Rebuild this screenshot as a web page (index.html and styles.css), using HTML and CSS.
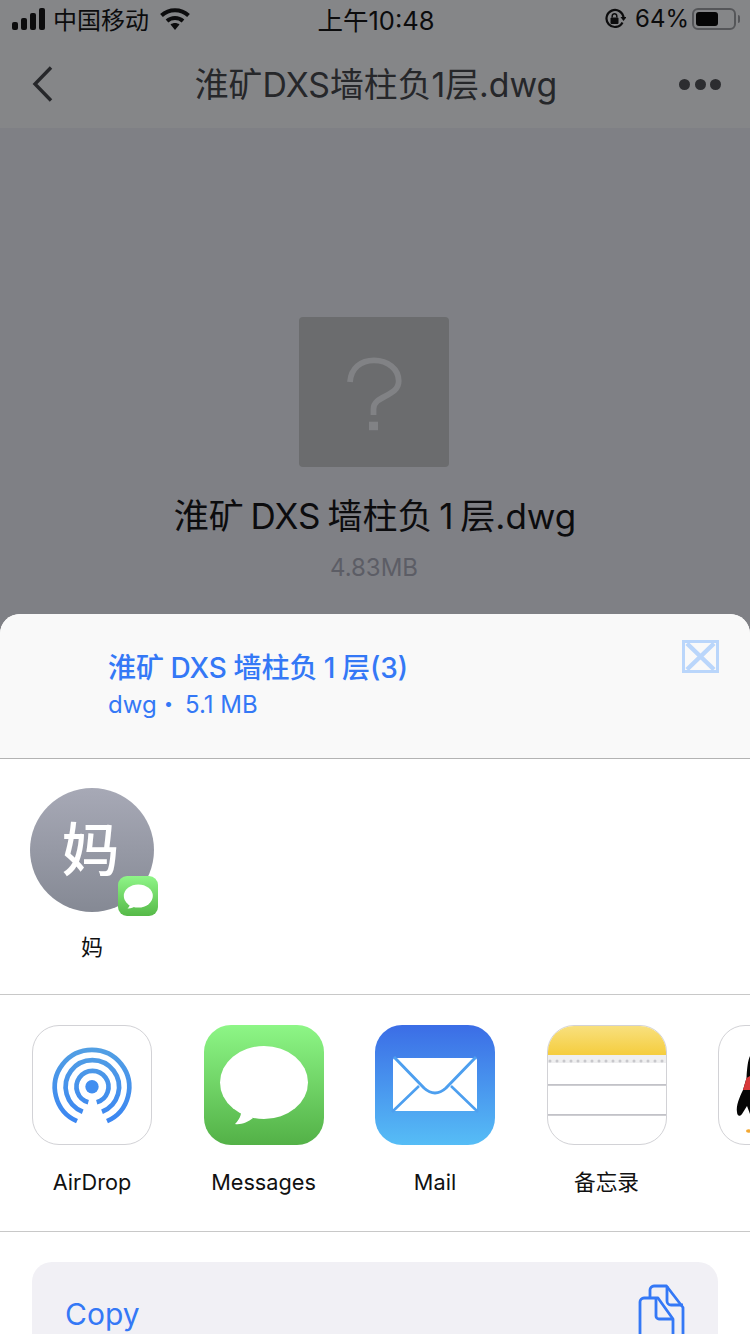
FILE: index.html
```html
<!DOCTYPE html>
<html lang="zh-CN">
<head>
<meta charset="utf-8">
<title>淮矿DXS墙柱负1层.dwg</title>
<link rel="stylesheet" href="styles.css">
</head>
<body>
<div class="page">
  <header class="top">
    <div class="status">
      <div class="status-left">
        <svg class="signal" width="33" height="22" viewBox="0 0 33 22"><rect x="0" y="14" width="6" height="8" rx="2"/><rect x="9" y="10" width="6" height="12" rx="2"/><rect x="18" y="5" width="6" height="17" rx="2"/><rect x="27" y="0" width="6" height="22" rx="2"/></svg>
        <span class="carrier">中国移动</span>
        <svg class="wifi" width="30" height="22" viewBox="0 0 30 22"><path d="M1.500 7.500C9 .5 21 .5 28.500 7.500" fill="none" stroke="#0c0c0d" stroke-width="4"/><path d="M7 13c4.500-4 11.500-4 16 0" fill="none" stroke="#0c0c0d" stroke-width="4"/><path d="M10.500 16.500c2.500-2 6.500-2 9 0L15 22z" fill="#0c0c0d"/></svg>
      </div>
      <div class="clock">上午10:48</div>
      <div class="status-right">
        <svg class="lock" width="22" height="22" viewBox="0 0 22 22"><path d="M18.500 14.500A8.500 8.500 0 1 1 19.500 10" fill="none" stroke="#0c0c0d" stroke-width="2.200"/><path d="M16.500 9h6l-3 4z" fill="#0c0c0d"/><rect x="6.500" y="9.500" width="8" height="6.500" rx="1" fill="#0c0c0d"/><path d="M8.200 9.500V8a2.300 2.300 0 0 1 4.600 0v1.500" fill="none" stroke="#0c0c0d" stroke-width="1.500"/></svg>
        <span class="battery-text">64%</span>
        <div class="battery"><div class="battery-fill"></div></div>
        <div class="battery-cap"></div>
      </div>
    </div>
    <nav class="nav">
      <svg class="back" width="24" height="38" viewBox="0 0 24 38"><path d="M20 2.500 4 19l16 16.500" fill="none" stroke="#26272a" stroke-width="3.400"/></svg>
      <div class="nav-title">淮矿DXS墙柱负1层.dwg</div>
      <div class="dots"><span class="dot"></span><span class="dot"></span><span class="dot"></span></div>
    </nav>
  </header>

  <main class="preview">
    <div class="file-icon">
      <svg width="150" height="150" viewBox="0 0 150 150"><path d="M74.500 98V92C74.500 78 99.700 80 99.700 64 99.700 52 89 43.300 75 43.300 62 43.300 52 51 51 65" fill="none" stroke="#818285" stroke-width="5.800"/><rect x="70" y="104.700" width="9" height="8.500" fill="#818285"/></svg>
    </div>
    <div class="file-name">淮矿 DXS 墙柱负 1 层.dwg</div>
    <div class="file-size">4.83MB</div>
  </main>

  <section class="sheet">
    <div class="sheet-head">
      <div class="sheet-info">
        <div class="sheet-title">淮矿 DXS 墙柱负 1 层(3)</div>
        <div class="sheet-meta">dwg・&#8201;5.1 MB</div>
      </div>
      <svg class="close" width="37" height="33" viewBox="0 0 37 33"><rect x="1.500" y="1.500" width="34" height="30" fill="none" stroke="#bad6fb" stroke-width="3"/><path d="M5 3.500 32 29.500M32 3.500 5 29.500" stroke="#bad6fb" stroke-width="4.500"/></svg>
    </div>

    <div class="people">
      <div class="person">
        <div class="avatar">妈
          <svg class="avatar-badge" width="40" height="40" viewBox="0 0 40 40">
            <defs><linearGradient id="bg1" x1="0" y1="0" x2="0" y2="1"><stop offset="0" stop-color="#8ff588"/><stop offset="1" stop-color="#56b948"/></linearGradient></defs>
            <rect width="40" height="40" rx="9" fill="url(#bg1)"/>
            <ellipse cx="20.300" cy="20" rx="14.500" ry="11.500" fill="#fff"/>
            <path d="M12 27c0 2-1 4.500-2.500 5.500 3 .3 6-1 8-2.500z" fill="#fff"/>
          </svg>
        </div>
        <div class="person-name">妈</div>
      </div>
    </div>

    <div class="apps">
      <div class="app">
        <div class="app-icon app-icon-line">
          <svg width="118" height="118" viewBox="0 0 118 118">
            <defs><linearGradient id="air" gradientUnits="userSpaceOnUse" x1="0" y1="20" x2="0" y2="96"><stop offset="0" stop-color="#53a0e3"/><stop offset="1" stop-color="#3b86f2"/></linearGradient></defs>
            <g fill="none" stroke="url(#air)" stroke-width="4.700">
              <path d="M44 95.200A37.200 37.200 0 1 1 74 95.200"/>
              <path d="M49.700 85.700A26.700 26.700 0 1 1 69 85.700"/>
              <path d="M55.300 76.300A16 16 0 1 1 63.700 76.300"/>
            </g>
            <circle cx="59" cy="60.700" r="6.700" fill="#418ef0"/>
          </svg>
        </div>
        <div class="app-name">AirDrop</div>
      </div>
      <div class="app">
        <div class="app-icon">
          <svg width="120" height="120" viewBox="0 0 120 120">
            <defs><linearGradient id="msg" x1="0" y1="0" x2="0" y2="1"><stop offset="0" stop-color="#8df686"/><stop offset="1" stop-color="#53b147"/></linearGradient></defs>
            <rect width="120" height="120" fill="url(#msg)"/>
            <ellipse cx="60" cy="57.500" rx="44" ry="36.500" fill="#fff"/>
            <path d="M37 84c1 6-2 11-6 15 6 1 13-2 18-6z" fill="#fff"/>
          </svg>
        </div>
        <div class="app-name">Messages</div>
      </div>
      <div class="app">
        <div class="app-icon">
          <svg width="120" height="120" viewBox="0 0 120 120">
            <defs><linearGradient id="mail" x1="0" y1="0" x2="0" y2="1"><stop offset="0" stop-color="#3b6de6"/><stop offset="1" stop-color="#56bdf6"/></linearGradient></defs>
            <rect width="120" height="120" fill="url(#mail)"/>
            <path d="M20 33h80a2 2 0 0 1 2 2v49a2 2 0 0 1-2 2H20a2 2 0 0 1-2-2V35a2 2 0 0 1 2-2z" fill="#fff"/>
            <path d="M17 87 44 61M103 87 76 61" stroke="#4d9fef" stroke-width="2.600" fill="none"/>
            <path d="M19 32 49 63Q60 73 71 63L101 32" stroke="#4d9fef" stroke-width="3" fill="none"/>
          </svg>
        </div>
        <div class="app-name">Mail</div>
      </div>
      <div class="app">
        <div class="app-icon app-icon-line">
          <svg width="118" height="118" viewBox="0 0 118 118">
            <defs><linearGradient id="note" x1="0" y1="0" x2="0" y2="1"><stop offset="0" stop-color="#f8e07e"/><stop offset="1" stop-color="#f5cd3e"/></linearGradient></defs>
            <rect width="118" height="29" fill="url(#note)"/>
            <rect y="29" width="118" height="8" fill="#efeff0"/>
            <line x1="2" y1="35" x2="118" y2="35" stroke="#c8c8cc" stroke-width="3" stroke-linecap="round" stroke-dasharray="0 7"/>
            <rect y="58" width="118" height="1.800" fill="#c2c2c8"/>
            <rect y="88" width="118" height="1.800" fill="#c2c2c8"/>
          </svg>
        </div>
        <div class="app-name">备忘录</div>
      </div>
      <div class="app">
        <div class="app-icon app-icon-line">
          <svg width="118" height="118" viewBox="0 0 118 118">
            <path d="M31 30C29 34 28 42 27.500 52L24 64C20 72 17 80 18 86c0 4 3 5 5 2l5-8 3 8z" fill="#050505"/>
            <path d="M27.500 52 31 50V64H24z" fill="#d8383a"/>
            <ellipse cx="29.500" cy="105" rx="2.500" ry="1.800" fill="#f3a832"/>
          </svg>
        </div>
      </div>
    </div>

    <div class="actions">
      <div class="action">
        <span class="action-label">Copy</span>
        <svg class="action-icon" width="48" height="60" viewBox="0 0 48 60"><g fill="none" stroke="#3478f6" stroke-width="2.800" stroke-linejoin="round"><path d="M12 13V6a4 4 0 0 1 4-4h12.500L45 23.500V52a4 4 0 0 1-4 4h-5"/><path d="M29 2v15a4 4 0 0 0 4 4h12"/><path d="M2 18a4 4 0 0 1 4-4h14l15 21v30H2z"/><path d="M18 14v18a3 3 0 0 0 3 3h14"/></g></svg>
      </div>
    </div>
  </section>
</div>
</body>
</html>
```

FILE: styles.css
```css
* { box-sizing: border-box; }

html, body {
  margin: 0;
  padding: 0;
}

body {
  width: 750px;
  height: 1334px;
  overflow: hidden;
  font-family: "Inter", "Noto Sans CJK SC", sans-serif;
}

.page {
  width: 750px;
  height: 1334px;
  display: flex;
  flex-direction: column;
  overflow: hidden;
  background: #7f8085;
}

.top {
  height: 128px;
  background: #858688;
  flex: none;
}

.status {
  height: 40px;
  display: grid;
  grid-template-columns: 1fr auto 1fr;
  align-items: center;
  padding: 0 10px 3px 12px;
  color: #0c0c0d;
}

.status-left, .status-right {
  display: flex;
  align-items: center;
}

.status-right { justify-content: flex-end; }

.signal { fill: #0c0c0d; margin-right: 8px; }

.carrier { font-size: 24px; margin-right: 11px; }

.clock { font-size: 25.500px; }

.lock { margin-right: 9px; }

.battery-text { font-size: 24px; margin-right: 3px; }

.battery {
  width: 44px;
  height: 22px;
  border: 2px solid #555659;
  border-radius: 6px;
  padding: 2px;
}

.battery-fill {
  width: 60%;
  height: 100%;
  background: #050505;
  border-radius: 3px;
}

.battery-cap {
  width: 2px;
  height: 8px;
  margin-left: 2px;
  background: #555659;
  border-radius: 0 2px 2px 0;
}

.nav {
  height: 88px;
  display: grid;
  grid-template-columns: 1fr auto 1fr;
  align-items: center;
  padding: 0 29px 0 31px;
}

.back { display: block; margin-top: -1px; }

.nav-title {
  font-size: 33.800px;
  color: #26272a;
  white-space: nowrap;
  margin-top: -3px;
}

.dots {
  display: flex;
  justify-content: flex-end;
  gap: 4.500px;
}

.dot {
  width: 11px;
  height: 11px;
  border-radius: 50%;
  background: #2c2d30;
}

.preview {
  height: 486px;
  flex: none;
  display: flex;
  flex-direction: column;
  align-items: center;
  padding-top: 189px;
}

.file-icon {
  width: 150px;
  height: 150px;
  margin-right: 2px;
  border-radius: 4px;
  background: #6b6c6e;
}

.file-icon svg { display: block; }

.file-name {
  margin-top: 24px;
  font-size: 35px;
  line-height: 50px;
  word-spacing: -3px;
  color: #0c0c0e;
  white-space: nowrap;
}

.file-size {
  margin-top: 12px;
  margin-right: 2px;
  font-size: 24px;
  line-height: 30px;
  color: #5c5d65;
}

.sheet {
  flex: 1;
  min-height: 0;
  background: #fff;
  border-radius: 20px 20px 0 0;
  overflow: hidden;
}

.sheet-head {
  height: 145px;
  background: #f9f9f9;
  border-bottom: 1px solid #b3b3b3;
  display: flex;
  justify-content: space-between;
  align-items: flex-start;
  padding: 26px 31px 0 108px;
}

.sheet-title {
  font-size: 28px;
  line-height: 36px;
  font-weight: 500;
  word-spacing: -1px;
  color: #3478f6;
  white-space: nowrap;
  margin-top: 10px;
}

.sheet-meta {
  font-size: 24px;
  line-height: 30px;
  color: #3478f6;
  margin-top: 4px;
}

.close { flex: none; }

.people {
  height: 236px;
  border-bottom: 1px solid #c8c8c8;
  padding: 29px 0 0 30px;
}

.person { width: 124px; }

.avatar {
  position: relative;
  width: 124px;
  height: 124px;
  padding-right: 3px;
  border-radius: 50%;
  background: linear-gradient(#a7a9b6, #858994);
  color: #fff;
  font-size: 58px;
  font-weight: 500;
  line-height: 124px;
  text-align: center;
}

.avatar-badge {
  position: absolute;
  left: 88px;
  top: 88px;
  display: block;
}

.person-name {
  margin-top: 20px;
  font-size: 22px;
  line-height: 30px;
  text-align: center;
  color: #111;
}

.apps {
  height: 237px;
  border-bottom: 1px solid #c8c8c8;
  display: flex;
  gap: 51.500px;
  padding: 30px 0 0 32px;
  overflow: hidden;
}

.app {
  flex: none;
  width: 120px;
}

.app-icon {
  width: 120px;
  height: 120px;
  border-radius: 27px;
  overflow: hidden;
  background: #fff;
}

.app-icon svg { display: block; }

.app-icon-line { border: 1px solid #d2d2d6; }

.app-name {
  margin-top: 22px;
  font-size: 21.700px;
  line-height: 30px;
  text-align: center;
  color: #111;
  white-space: nowrap;
}

.actions { padding: 30px 32px 0; }

.action {
  height: 120px;
  border-radius: 20px;
  background: #f1f0f5;
  display: flex;
  justify-content: space-between;
  align-items: flex-start;
  padding: 22px 32px 0 33px;
}

.action-label {
  font-size: 30px;
  line-height: 60px;
  color: #3478f6;
}

.action-icon { display: block; }
```
